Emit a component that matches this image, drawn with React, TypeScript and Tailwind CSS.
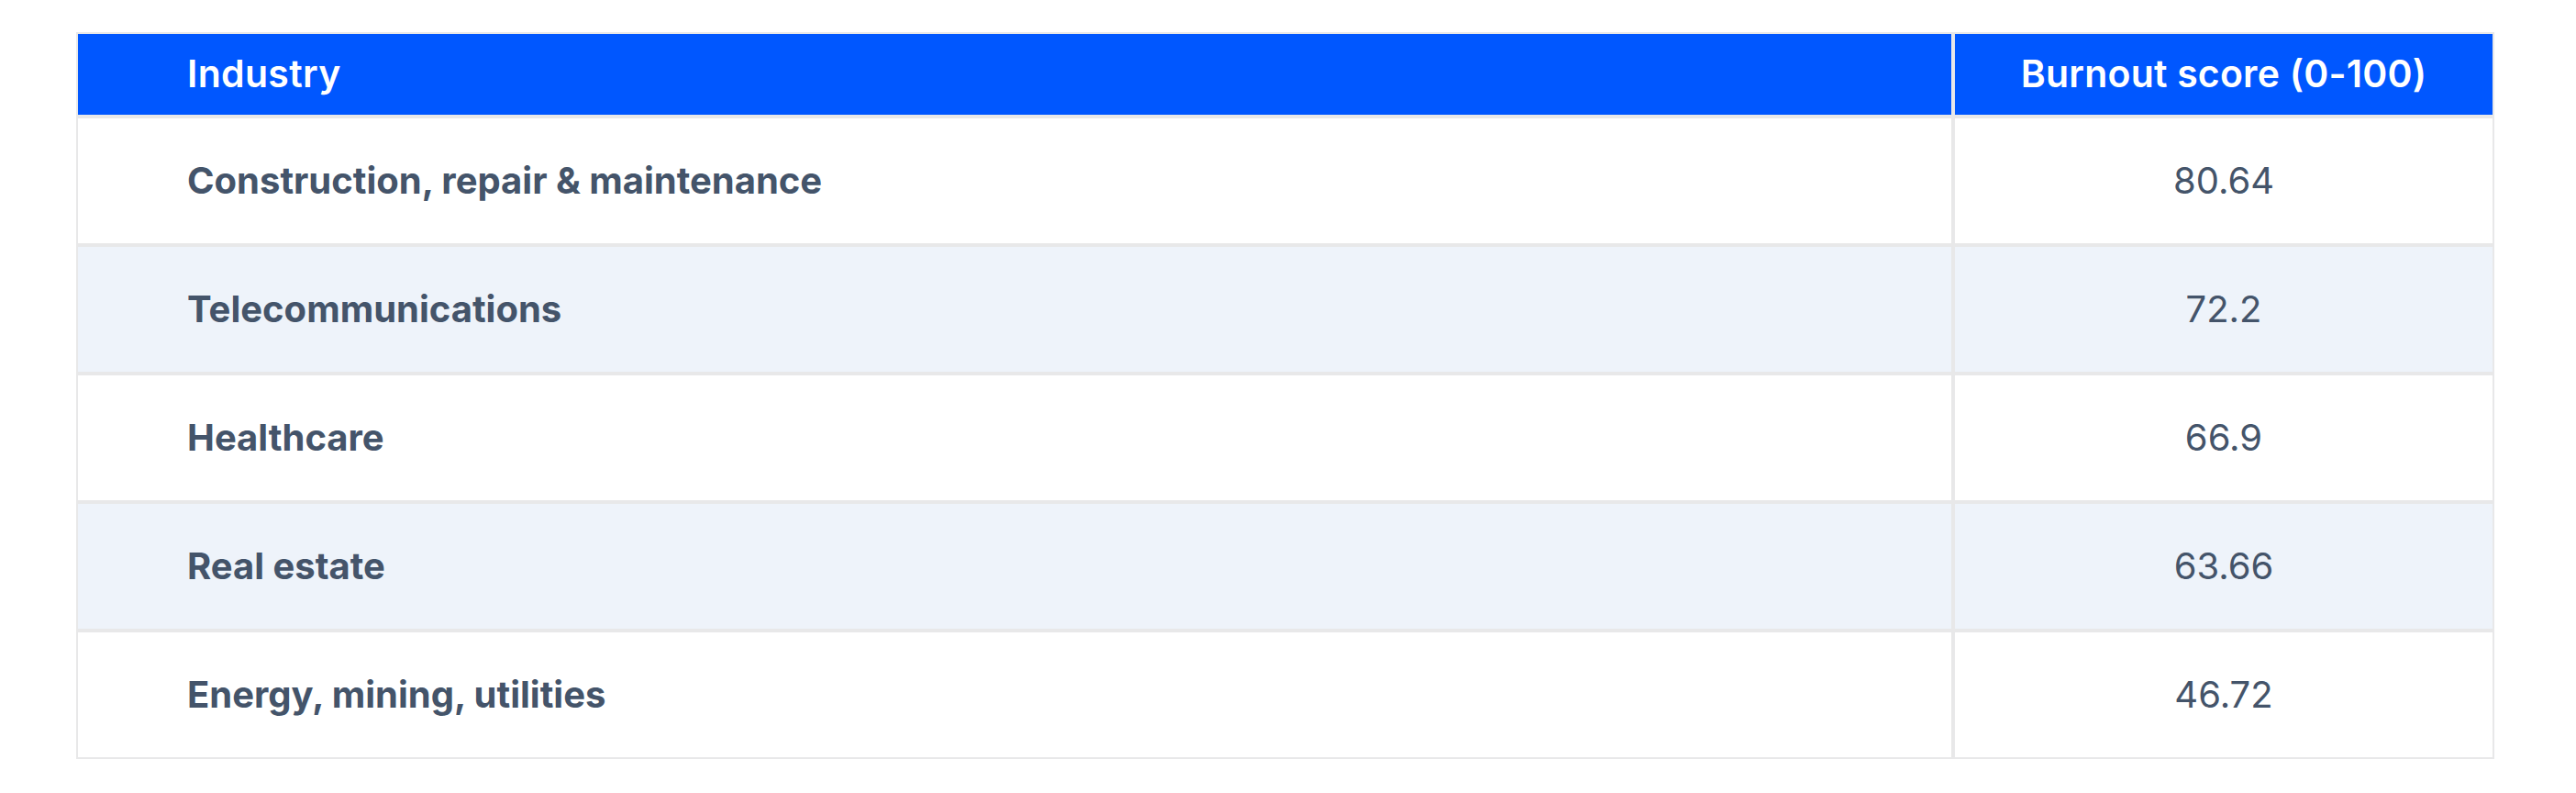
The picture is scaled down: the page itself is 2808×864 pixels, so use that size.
import React from "react";

const rows: [string, string][] = [
  ["Construction, repair & maintenance", "80.64"],
  ["Telecommunications", "72.2"],
  ["Healthcare", "66.9"],
  ["Real estate", "63.66"],
  ["Energy, mining, utilities", "46.72"],
];

export default function App() {
  return (
    <div className="min-h-[864px] w-[2808px] bg-white pl-[83px] pt-[35px] font-['Inter','Noto_Sans',sans-serif]">
      <div className="grid w-[2636px] grid-cols-[2046px_590px]">
        <div className="flex h-[92px] items-center border-2 border-[#e8e8e9] bg-[#0057ff] pl-[119px] text-[41px] font-semibold tracking-[0.3px] text-white">
          Industry
        </div>
        <div className="flex h-[92px] items-center justify-center border-2 border-[#e8e8e9] bg-[#0057ff] text-[41px] font-semibold tracking-[0.2px] text-white">
          Burnout score (0-100)
        </div>
        {rows.map(([name, score], i) => (
          <React.Fragment key={name}>
            <div
              className={
                i % 2 === 1
                  ? "flex h-[140px] items-center border-2 border-[#e8e8e9] bg-[#eef3fa] pl-[119px] text-[40px] font-bold text-[#44546a]"
                  : "flex h-[140px] items-center border-2 border-[#e8e8e9] bg-white pl-[119px] text-[40px] font-bold text-[#44546a]"
              }
            >
              {name}
            </div>
            <div
              className={
                i % 2 === 1
                  ? "flex h-[140px] items-center justify-center border-2 border-[#e8e8e9] bg-[#eef3fa] text-[40px] font-normal text-[#44546a]"
                  : "flex h-[140px] items-center justify-center border-2 border-[#e8e8e9] bg-white text-[40px] font-normal text-[#44546a]"
              }
            >
              {score}
            </div>
          </React.Fragment>
        ))}
      </div>
    </div>
  );
}
